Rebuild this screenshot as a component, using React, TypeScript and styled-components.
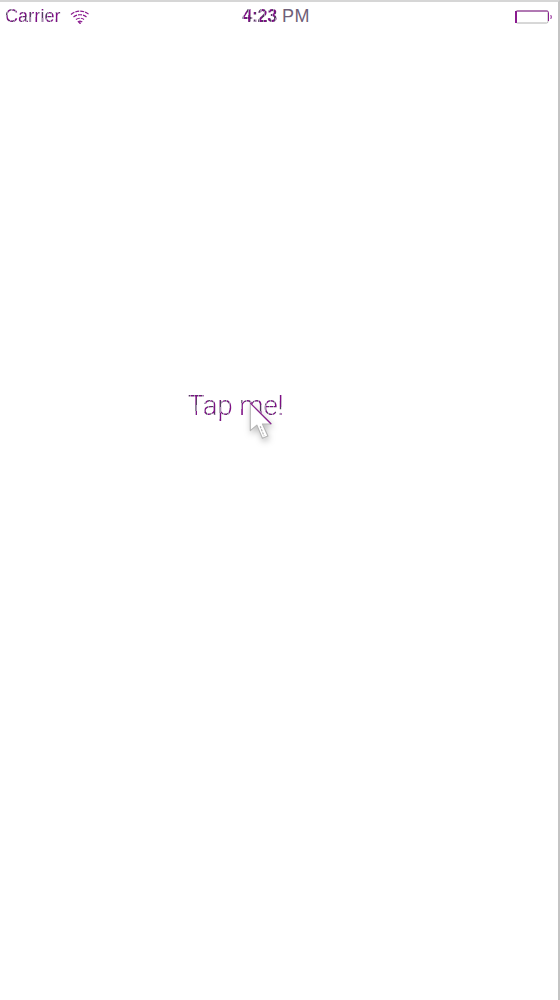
import styled, { createGlobalStyle, css } from 'styled-components';

const GlobalStyle = createGlobalStyle`
	html, body {
		margin: 0;
		padding: 0;
		background: #fff;
	}
`;

const purple = '#8a1a8f';

// The reference is a low colour capture, glyphs break up in purple and grey
const dithered = css`
	background: repeating-linear-gradient(100deg, #7d0f84 0 2px, #4f3f5c 2px 3px, #a78fb2 3px 4px);
	-webkit-background-clip: text;
	background-clip: text;
	color: transparent;
`;

const Screen = styled.div`
	width: 560px;
	height: 1000px;
	box-sizing: border-box;
	border-top: 2px solid #d6d6d6;
	border-right: 2px solid #c4c4c4;
	background: #fff;
	display: flex;
	flex-direction: column;
`;

const StatusBar = styled.div`
	height: 29px;
	padding: 0 6px 0 5px;
	display: grid;
	grid-template-columns: 1fr auto 1fr;
	align-items: center;
	font-family: 'Liberation Sans', sans-serif;
`;

const Carrier = styled.div`
	display: flex;
	align-items: center;
	gap: 9px;
	font-size: 18px;
`;

const CarrierName = styled.span`
	${dithered}
	letter-spacing: 0.1px;
`;

const Time = styled.div`
	display: flex;
	gap: 5px;
	font-size: 18px;
	font-weight: 700;
	letter-spacing: -0.3px;
	margin-left: -5px;
`;

const TimePart = styled.span<{ $pale?: boolean }>`
	${(p) =>
		p.$pale
			? css`
					font-weight: 400;
					letter-spacing: 0.4px;
					color: #6f5f78;
				`
			: dithered}
`;

const BatteryWrap = styled.div`
	justify-self: end;
	display: flex;
	align-items: center;
`;

const Main = styled.main`
	flex: 1;
	padding: 357px 0 0 188px;
`;

const TapButton = styled.button`
	position: relative;
	border: 0;
	padding: 0;
	background: none;
	font-family: 'Roboto', 'Liberation Sans', sans-serif;
	font-weight: 300;
	font-size: 27.3px;
	line-height: 36px;
`;

const TapLabel = styled.span`
	${dithered}
`;

const Cursor = styled.svg`
	position: absolute;
	left: 60px;
	top: 14px;
	filter: drop-shadow(1px 3px 3px rgba(0, 0, 0, 0.25));
`;

const Wifi = () => (
	<svg width="20" height="14" viewBox="0 0 20 14" fill="none" stroke={purple} strokeWidth="1.2" strokeDasharray="4 1">
		<path d="M1 4.5C6 0 14 0 19 4.5" />
		<path d="M3.5 7C7 4 13 4 16.5 7" />
		<path d="M6 9.5C8.2 7.8 11.8 7.8 14 9.5" />
		<path d="M8.3 11.7C9.3 11 10.7 11 11.7 11.7L10 13.4Z" />
	</svg>
);

const Battery = () => (
	<svg width="37" height="14" viewBox="0 0 37 14" fill="none">
		<rect x="1" y="1" width="32" height="12" rx="1.5" stroke="#b0b0b0" />
		<path d="M1.5 1H32C32.9 1 33.5 1.6 33.5 2.5V11" stroke={purple} />
		<path d="M1 1V13" stroke={purple} strokeWidth="2" />
		<path d="M35.5 5C36.5 5.5 36.5 8.5 35.5 9" stroke={purple} />
	</svg>
);

const App = () => {
	return (
		<>
			<GlobalStyle />
			<Screen>
				<StatusBar>
					<Carrier>
						<CarrierName>Carrier</CarrierName>
						<Wifi />
					</Carrier>
					<Time>
						<TimePart>4:23</TimePart>
						<TimePart $pale>PM</TimePart>
					</Time>
					<BatteryWrap>
						<Battery />
					</BatteryWrap>
				</StatusBar>
				<Main>
					<TapButton>
						<TapLabel>Tap me!</TapLabel>
						<Cursor width="31" height="44" viewBox="0 0 28 40">
							<path
								d="M2 1L2 26L8 21L13 33L18 31L13 20L21 20Z"
								fill="#fff"
								stroke="#b5b5b5"
								strokeWidth="1"
								strokeLinejoin="round"
							/>
							<path d="M2 1L21 20" stroke={purple} strokeWidth="1" />
							<path d="M11 22L14.5 31" stroke="#a8a8a8" strokeWidth="1" strokeDasharray="2 1" />
						</Cursor>
					</TapButton>
				</Main>
			</Screen>
		</>
	);
};

export default App;
